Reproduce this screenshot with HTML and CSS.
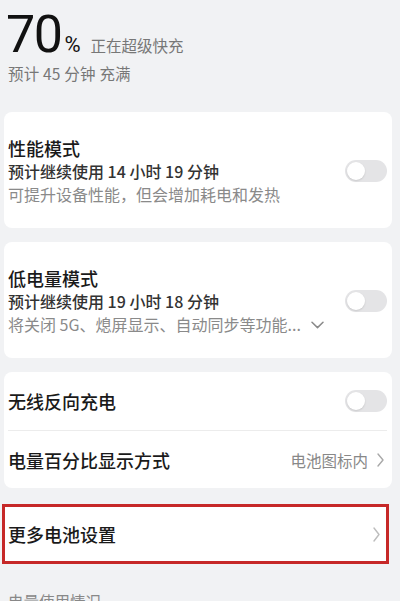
FILE: index.html
```html
<!DOCTYPE html>
<html lang="zh-CN">
<head>
<meta charset="utf-8">
<title>电池</title>
<link rel="stylesheet" href="styles.css">
</head>
<body>
<div class="page">
  <header class="status">
    <div class="level">
      <span class="num">70</span><span class="pct">%</span><span class="state">正在超级快充</span>
    </div>
    <div class="eta">预计 45 分钟 充满</div>
  </header>

  <section class="card mode first">
    <div class="mode-text">
      <div class="title">性能模式</div>
      <div class="est">预计继续使用 14 小时 19 分钟</div>
      <div class="desc">可提升设备性能，但会增加耗电和发热</div>
    </div>
    <span class="switch"></span>
  </section>

  <section class="card mode">
    <div class="mode-text">
      <div class="title">低电量模式</div>
      <div class="est">预计继续使用 19 小时 18 分钟</div>
      <div class="desc">将关闭 5G、熄屏显示、自动同步等功能...
        <svg class="chev-down" width="13" height="8" viewBox="0 0 13 8"><path d="M1 1.2 L6.5 6.6 L12 1.2" fill="none" stroke="#8a8a8a" stroke-width="1.5" stroke-linecap="round" stroke-linejoin="round"/></svg>
      </div>
    </div>
    <span class="switch"></span>
  </section>

  <section class="card list">
    <div class="row">
      <span class="label">无线反向充电</span>
      <span class="switch"></span>
    </div>
    <div class="divider"></div>
    <div class="row">
      <span class="label">电量百分比显示方式</span>
      <span class="value">电池图标内</span>
      <svg class="chev" width="7" height="14" viewBox="0 0 7 14"><path d="M1 1 L6 7 L1 13" fill="none" stroke="#a8a8a8" stroke-width="1.4" stroke-linecap="round" stroke-linejoin="round"/></svg>
    </div>
  </section>

  <section class="more">
    <span class="label">更多电池设置</span>
    <svg class="chev" width="7" height="15" viewBox="0 0 7 15"><path d="M1 1 L6 7.5 L1 14" fill="none" stroke="#bdbdbd" stroke-width="1.4" stroke-linecap="round" stroke-linejoin="round"/></svg>
  </section>

  <div class="section-label">电量使用情况</div>
</div>
</body>
</html>
```

FILE: styles.css
```css
html, body {
  margin: 0;
  padding: 0;
}
body {
  background: #f1f2f4;
  font-family: "Noto Sans CJK SC", "Noto Sans", sans-serif;
  width: 400px;
  height: 601px;
  overflow: hidden;
}
.page {
  width: 400px;
}
.status {
  padding: 9px 0 0 8px;
}
.level {
  display: flex;
  align-items: baseline;
  height: 52px;
}
.num {
  font-family: Roboto, "Noto Sans", sans-serif;
  font-size: 52px;
  line-height: 52px;
  letter-spacing: -1.5px;
  margin-left: -2px;
  color: #111;
}
.pct {
  font-family: Roboto, "Noto Sans", sans-serif;
  font-size: 22px;
  margin-left: 3px;
  color: #111;
}
.state {
  font-size: 15.5px;
  color: #777;
  margin-left: 10px;
}
.eta {
  margin-top: 2px;
  font-size: 15.5px;
  line-height: 20px;
  letter-spacing: 0.2px;
  color: #777;
}
.card {
  background: #fff;
  border-radius: 8px;
  margin: 0 8px 0 4px;
}
.mode {
  display: flex;
  align-items: center;
  padding: 24px 5px 23px 4px;
  margin-bottom: 14px;
}
.mode.first {
  margin-top: 29px;
}
.mode-text {
  flex: 1;
  min-width: 0;
}
.title {
  font-size: 18px;
  line-height: 24px;
  font-weight: 500;
  color: #1a1a1a;
}
.est {
  font-size: 16px;
  line-height: 22px;
  font-weight: 500;
  color: #333;
}
.desc {
  font-size: 16px;
  line-height: 22px;
  margin-top: 1px;
  color: #8a8a8a;
  display: flex;
  align-items: center;
  white-space: nowrap;
}
.chev-down {
  margin-left: 10px;
  margin-top: 2px;
}
.switch {
  flex: none;
  position: relative;
  width: 42px;
  height: 22px;
  border-radius: 11px;
  background: #e4e4e6;
}
.switch::after {
  content: "";
  position: absolute;
  left: 2px;
  top: 2px;
  width: 18px;
  height: 18px;
  border-radius: 50%;
  background: #fff;
  box-shadow: 0 1px 2px rgba(0, 0, 0, 0.12);
}
.row {
  display: flex;
  align-items: center;
  height: 58px;
  padding: 0 5px 0 4px;
}
.label {
  flex: 1;
  font-size: 18px;
  font-weight: 500;
  color: #1a1a1a;
}
.divider {
  height: 1px;
  background: #ececec;
  margin: 0 5px 0 4px;
}
.list .row:last-child {
  height: 57px;
}
.value {
  font-size: 15.5px;
  color: #888;
  margin-right: 9px;
}
.chev {
  flex: none;
  margin-right: 3px;
}
.more {
  display: flex;
  align-items: center;
  margin: 16px 11px 0 2px;
  height: 54px;
  padding: 0 3px;
  background: #fff;
  border: 3px solid #c62828;
}
.section-label {
  margin: 27px 0 0 8px;
  font-size: 15.5px;
  line-height: 20px;
  color: #888;
}
```
